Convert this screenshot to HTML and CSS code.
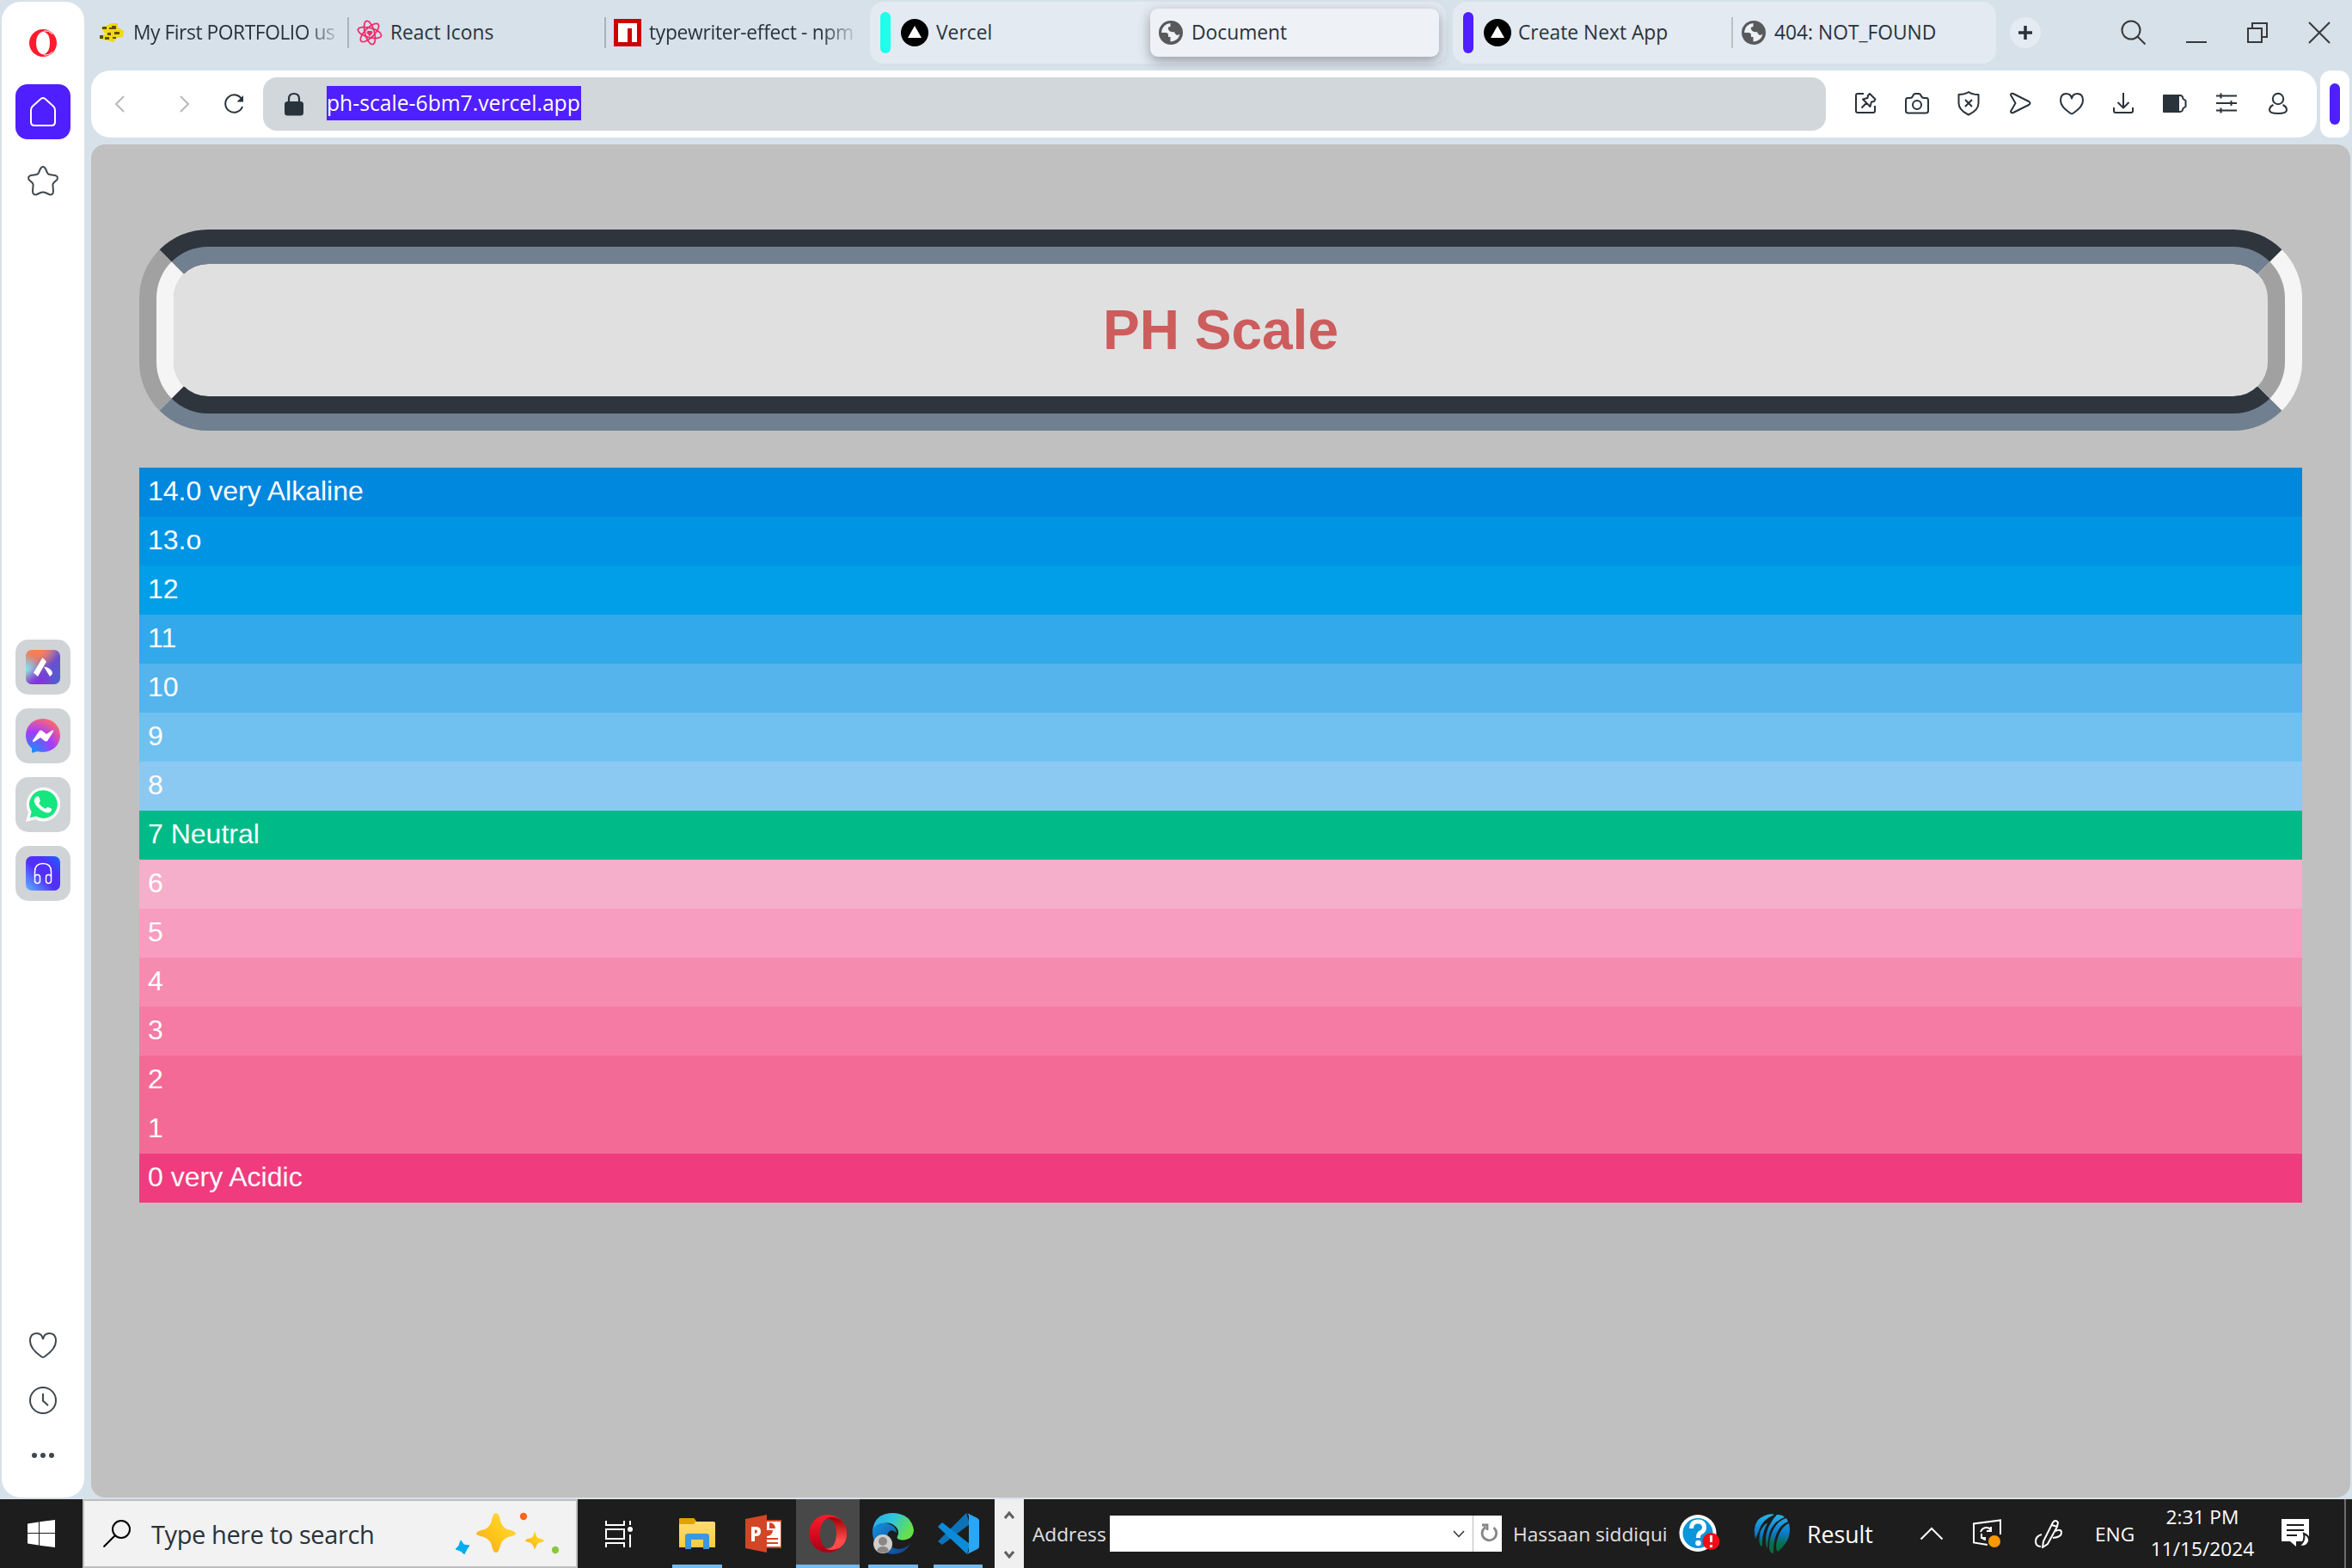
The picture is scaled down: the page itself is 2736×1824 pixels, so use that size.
FILE: index.html
```html
<!DOCTYPE html>
<html lang="en">
<head>
<meta charset="utf-8">
<title>Document</title>
<link rel="stylesheet" href="styles.css">
</head>
<body>
<svg class="defs" width="0" height="0">
  <defs>
    <linearGradient id="aria" x1="0" y1="0" x2="1" y2="1"><stop offset="0" stop-color="#f58a55"/><stop offset=".3" stop-color="#c07a9a"/><stop offset=".6" stop-color="#6a4fd0"/><stop offset="1" stop-color="#4a63cf"/></linearGradient>
    <radialGradient id="ariaCyan" cx="0" cy=".55" r=".45"><stop offset="0" stop-color="#7fe6f2"/><stop offset="1" stop-color="#7fe6f2" stop-opacity="0"/></radialGradient>
    <radialGradient id="ariaViolet" cx=".4" cy="1" r=".5"><stop offset="0" stop-color="#8a2fe0"/><stop offset="1" stop-color="#8a2fe0" stop-opacity="0"/></radialGradient>
    <radialGradient id="ariaOrange" cx=".4" cy="0" r=".5"><stop offset="0" stop-color="#ff8048"/><stop offset="1" stop-color="#ff8048" stop-opacity="0"/></radialGradient>
    <radialGradient id="mess" cx=".2" cy="1" r="1.1"><stop offset="0" stop-color="#0a95ff"/><stop offset=".55" stop-color="#a33bff"/><stop offset="1" stop-color="#ff6a6c"/></radialGradient>
    <linearGradient id="phones" x1="0" y1="1" x2="1" y2="0"><stop offset="0" stop-color="#5cb8ff"/><stop offset=".45" stop-color="#5330fa"/><stop offset=".7" stop-color="#4d32fb"/><stop offset="1" stop-color="#1b66ff"/></linearGradient>
    <linearGradient id="star" x1="0" y1="1" x2="1" y2="0"><stop offset="0" stop-color="#f5a623"/><stop offset=".5" stop-color="#ffc81a"/><stop offset="1" stop-color="#fde04a"/></linearGradient>
    <linearGradient id="folder" x1="0" y1="0" x2="0" y2="1"><stop offset="0" stop-color="#ffdf7a"/><stop offset="1" stop-color="#fbc93f"/></linearGradient>
    <linearGradient id="operaA" x1="0" y1="0" x2="0" y2="1"><stop offset="0" stop-color="#ff1b2d"/><stop offset="1" stop-color="#a70014"/></linearGradient>
    <linearGradient id="operaB" x1="0" y1="0" x2="0" y2="1"><stop offset="0" stop-color="#9c0000"/><stop offset=".7" stop-color="#ff4b4b"/></linearGradient>
    <linearGradient id="edgeTop" x1="0" y1="0" x2="1" y2=".4"><stop offset="0" stop-color="#2aa8ea"/><stop offset=".5" stop-color="#2fc5dc"/><stop offset="1" stop-color="#66e04a"/></linearGradient>
    <linearGradient id="edgeLow" x1="0" y1="0" x2="1" y2="1"><stop offset="0" stop-color="#1490df"/><stop offset="1" stop-color="#123f86"/></linearGradient>
    <linearGradient id="icc" x1="0" y1="0" x2="0" y2="1"><stop offset="0" stop-color="#29b4e8"/><stop offset=".5" stop-color="#0b78c8"/><stop offset=".75" stop-color="#06704f"/><stop offset="1" stop-color="#0a6a3c"/></linearGradient>
    <symbol id="globe" viewBox="0 0 28 28"><circle cx="14" cy="14" r="14" fill="#58595b"/><path d="M13.5 3 Q4 4 3 14 H8 Q11 14 11 17 V19 H13.5 V24.5 Q22 24 24.5 16 Q24 16 21 17 Q18 15 18 13 Q13 14 11 10 Q10 7 13.500 7 Z" fill="#eef1f6"/></symbol>
    <symbol id="vercel" viewBox="0 0 32 32"><circle cx="16" cy="16" r="16"/><path d="M16 8 L24 22 H8 Z" fill="#fff"/></symbol>
  </defs>
</svg>
<div class="browser">
  <nav class="sidebar">
    <svg class="opera" width="32" height="32" viewBox="0 0 32 32"><path fill-rule="evenodd" d="M16 0 A16 16 0 1 0 16 32 A16 16 0 1 0 16 0 Z M16 2.500 Q24 4 24 16 Q24 28 16 29.500 Q8 27 8 16 Q8 5 16 2.500 Z" fill="#ff1b2d"/><path d="M17 2.200 Q23 1 27 6 M17 29.800 Q23 31 27 26" stroke="#fff" stroke-width="1" fill="none"/></svg>
    <div class="home"><svg width="34" height="36" viewBox="0 0 34 36"><path d="M3 16 Q3 13.500 5 11.500 L14.500 3 Q17 1 19.500 3 L29 11.500 Q31 13.500 31 16 V30 Q31 34 27 34 H7 Q3 34 3 30 Z"/></svg></div>
    <svg class="line pin-star" width="38" height="36" viewBox="0 0 38 36"><path d="M19 2 Q21 2 22.300 5 L24 9 Q25 11 27.500 11.300 L33 12 Q37 13 35.500 17 L31.500 20.500 Q30 22 30.500 24.500 L31 30 Q31 35 27 34.500 L21.500 32 Q19 31 16.500 32 L11 34.500 Q7 35 7 30 L7.500 24.500 Q8 22 6.500 20.500 L2.500 17 Q1 13 5 12 L10.500 11.300 Q13 11 14 9 L15.700 5 Q17 2 19 2 Z"/></svg>
    <div class="apps">
      <div class="app"><svg width="40" height="40" viewBox="0 0 40 40"><rect width="40" height="40" rx="7" fill="url(#aria)"/><rect width="40" height="40" rx="7" fill="url(#ariaCyan)"/><rect width="40" height="40" rx="7" fill="url(#ariaViolet)"/><rect width="40" height="40" rx="7" fill="url(#ariaOrange)"/><path d="M19.500 9 L24 13.500 L14 31 L9 26.500 Z M21 19.500 Q31 21 31 28 L28 31 Z" fill="#fff"/></svg></div>
      <div class="app"><svg width="40" height="40" viewBox="0 0 40 40"><path d="M20 0 C8.500 0 0 8.300 0 19.500 C0 26 3 31 7 34.500 V39 Q7.200 40 8.500 39.600 L13.500 37.900 C26 41.500 40 34 40 19.500 C40 8.300 31.500 0 20 0 Z" fill="url(#mess)"/><path d="M8 25.500 L15.500 14.500 Q17 13 19 14 L24 18 L31 13.500 Q33 13 32 15 L25.500 25.500 Q24 27 22 26 L17 22 L9.500 27 Q7.500 27 8 25.500 Z" fill="#fff"/></svg></div>
      <div class="app"><svg width="40" height="40" viewBox="0 0 40 40"><path d="M20.500 0 A19.700 19.700 0 1 1 11 37 L0 40 L3.200 29 A19.700 19.700 0 0 1 20.500 0 Z" fill="#fff"/><path d="M20.500 3.300 A16.300 16.300 0 1 1 12 33.500 L4.800 35.300 L6.700 28.500 A16.300 16.300 0 0 1 20.500 3.300 Z" fill="#16e67f"/><path d="M12 11 Q14.500 9.500 15.500 11.500 L16.800 15.500 Q16.500 17 15.200 18.500 Q18 23 23 25 L25 23 Q26 22.500 30 24.800 Q30.500 27 28.500 28.500 Q25 31 18 26.500 Q8 19 10 13.500 Z" fill="#fff"/></svg></div>
      <div class="app"><svg width="40" height="40" viewBox="0 0 40 40"><rect width="40" height="40" rx="7" fill="url(#phones)"/><g fill="none" stroke="#fff" stroke-width="1.500"><path d="M10.500 24 V18 Q10.500 8.500 20 8.500 Q29.500 8.500 29.500 18 V24"/><rect x="10.500" y="21.500" width="6" height="10" rx="3"/><rect x="23.500" y="21.500" width="6" height="10" rx="3"/></g></svg></div>
    </div>
    <div class="tools">
      <svg class="line" width="34" height="32" viewBox="0 0 34 32"><path d="M17 9 Q16 2 9.500 2 Q2 2 2 11 Q2 20 15 29 Q17 30.500 19 29 Q32 20 32 11 Q32 2 24.500 2 Q18 2 17 9 Z"/></svg>
      <svg class="line" width="32" height="32" viewBox="0 0 32 32"><circle cx="16" cy="16" r="15"/><path d="M16 8 V16.500 L22 22"/></svg>
      <svg width="26" height="6" viewBox="0 0 26 6" fill="#3e4850"><circle cx="3" cy="3" r="3"/><circle cx="13" cy="3" r="3"/><circle cx="23" cy="3" r="3"/></svg>
    </div>
  </nav>
  <div class="main">
    <header class="tabs">
      <div class="tab t1"><svg width="30" height="24" viewBox="0 0 30 24"><path d="M2 6 L9 4 L14 1 L22 1 L22 6 L29 10 L28 17 L21 18 L17 23 L10 21 L2 20 L1 16 L8 14 Z" fill="#f2d90d"/><path d="M4 5 H9 V8 H4 Z M12 6 H15 V4 H20 V8 H12 Z M10 12 H14 V15 H10 Z M18 11 H24 V14 H18 Z M1 15 H5 V19 H1 Z M7 17 H12 V20 H7 Z M16 17 H20 V19 H16 Z" fill="#5c5108"/></svg><span class="label fade">My First PORTFOLIO us</span></div>
      <div class="tab t2"><svg width="30" height="30" viewBox="0 0 30 30" fill="none" stroke="#ee2c6c" stroke-width="1.800"><ellipse cx="15" cy="15" rx="14" ry="5.500" transform="rotate(15 15 15)"/><ellipse cx="15" cy="15" rx="14" ry="5.500" transform="rotate(75 15 15)"/><ellipse cx="15" cy="15" rx="14" ry="5.500" transform="rotate(135 15 15)"/><path d="M15 18 L12.500 15 Q12.500 13 15 14 Q17.500 13 17.500 15 Z" fill="#ee2c6c"/></svg><span class="label">React Icons</span></div>
      <div class="tab t3"><svg width="32" height="32" viewBox="0 0 32 32"><path fill="#c00" d="M0 0H32V32H0Z"/><path fill="#fff" d="M5 5H27V27H21V11H16V27H5Z"/></svg><span class="label fade">typewriter-effect - npm</span></div>
      <div class="group g1">
        <i class="mark teal"></i>
        <div class="gtab"><svg width="32" height="32"><use href="#vercel"/></svg><span class="label">Vercel</span></div>
        <div class="active"><svg width="28" height="28"><use href="#globe"/></svg><span class="label">Document</span></div>
      </div>
      <div class="group g2">
        <i class="mark"></i>
        <div class="gtab"><svg width="32" height="32"><use href="#vercel"/></svg><span class="label">Create Next App</span></div>
        <div class="gtab last"><svg width="28" height="28"><use href="#globe"/></svg><span class="label">404: NOT_FOUND</span></div>
      </div>
      <div class="plus"><svg width="16" height="16" viewBox="0 0 16 16"><path d="M8 0V16M0 8H16" stroke="#29333b" stroke-width="3.500"/></svg></div>
      <div class="window">
        <svg width="30" height="30" viewBox="0 0 30 30"><circle cx="12" cy="12" r="10.500"/><path d="M19 19 L28.500 28.500"/></svg>
        <svg width="24" height="28" viewBox="0 0 24 28"><path d="M0 25H24"/></svg>
        <svg width="26" height="26" viewBox="0 0 26 26"><path d="M7 7V2H24V18H19M2 8H18V24H2Z"/></svg>
        <svg width="26" height="26" viewBox="0 0 26 26"><path d="M1 1L25 25M25 1L1 25"/></svg>
      </div>
    </header>
    <div class="bars">
      <div class="toolbar">
        <svg class="nav dim" width="12" height="20" viewBox="0 0 12 20"><path d="M11 1L2 10L11 19"/></svg>
        <svg class="nav dim fwd" width="12" height="20" viewBox="0 0 12 20"><path d="M1 1L10 10L1 19"/></svg>
        <svg class="nav reload" width="24" height="24" viewBox="0 0 24 24"><path d="M21.500 7 A10.200 10.200 0 1 0 22 15"/><path d="M23 2V9.500H15.500Z" fill="#29333b" stroke="none"/></svg>
        <div class="url"><svg width="22" height="28" viewBox="0 0 22 28"><path d="M5 12V8Q5 2 11 2Q17 2 17 8V12" fill="none" stroke="#29333b" stroke-width="2.200"/><rect y="11" width="22" height="16.500" rx="3.500" fill="#29333b"/></svg><span class="address">ph-scale-6bm7.vercel.app</span></div>
        <div class="actions">
          <svg viewBox="0 0 30 30"><path d="M13 4H6Q4 4 4 6V24Q4 26 6 26H24Q26 26 26 24V18"/><path d="M20 4L26.500 10.500L25 13L22 13.500L20.500 19L12 10.500L17.500 9L18 6Z M16 15L10.500 20.500"/></svg>
          <svg viewBox="0 0 30 30"><path d="M10 7L11 5Q11.500 4 13 4H17Q18.500 4 19 5L20 7Q21 9 23 9H26Q28 9 28 12V24Q28 26.500 25 26.500H5Q2 26.500 2 24V12Q2 9 4 9H7Q9 9 10 7Z"/><circle cx="15" cy="17" r="5"/></svg>
          <svg viewBox="0 0 30 30"><path d="M15 2Q19 5 26.500 5V15Q26.500 23 15 28.500Q3.500 23 3.500 15V5Q11 5 15 2ZM11 11L19 19M19 11L11 19"/></svg>
          <svg viewBox="0 0 30 30"><path d="M4 5.500Q4 3 7 4L25 13Q28 15 25 17L7 26Q4 27 4 24.500L9.500 15Z"/></svg>
          <svg viewBox="0 0 30 30"><path d="M15 9.500Q14 4 8.500 4Q2 4 2 12Q2 19 13 26.500Q15 28 17 26.500Q28 19 28 12Q28 4 21.500 4Q16 4 15 9.500Z"/></svg>
          <svg viewBox="0 0 30 30"><path d="M15 3V20M8.500 14L15 20.500L21.500 14M4 20V24Q4 26 6 26H24Q26 26 26 24V20"/></svg>
          <svg viewBox="0 0 30 30"><path d="M2 8Q2 6 4 6H21Q24 6 24.500 10L27.500 12V19L24.500 21Q24 25 21 25H4Q2 25 2 23Z"/><path d="M2 6H19V25H2Z" fill="#29333b"/></svg>
          <svg viewBox="0 0 30 30"><path d="M3 6.500H27M3 15H27M3 23.500H27M8.500 3.500V9.500M20.500 12V18M8.500 20.500V26.500"/></svg>
          <svg viewBox="0 0 30 30"><circle cx="15" cy="10" r="6.200"/><path d="M9.500 17Q5 19 5 23Q5 27 15 27Q25 27 25 23Q25 19 20.500 17"/></svg>
        </div>
      </div>
      <div class="island"><i class="mark"></i></div>
    </div>
    <main class="page">
      <h1 class="title">PH Scale</h1>
      <div class="scale">
        <div class="row p14">14.0 very Alkaline</div>
        <div class="row p13">13.o</div>
        <div class="row p12">12</div>
        <div class="row p11">11</div>
        <div class="row p10">10</div>
        <div class="row p9">9</div>
        <div class="row p8">8</div>
        <div class="row p7">7 Neutral</div>
        <div class="row p6">6</div>
        <div class="row p5">5</div>
        <div class="row p4">4</div>
        <div class="row p3">3</div>
        <div class="row p2">2</div>
        <div class="row p1">1</div>
        <div class="row p0">0 very Acidic</div>
      </div>
    </main>
  </div>
</div>
<footer class="taskbar">
  <div class="start"><svg width="32" height="32" viewBox="0 0 32 32"><path fill="#fff" d="M0 4.500L13 2.500V15H0ZM14 2.300L32 0V15H14ZM0 16H13V29.500L0 27.500ZM14 16H32V32L14 29.700Z"/></svg></div>
  <div class="search"><svg width="32" height="32" viewBox="0 0 32 32" fill="none" stroke="#000" stroke-width="2"><circle cx="21" cy="11" r="10"/><path d="M14 18L.5 31.500"/></svg><span class="hint">Type here to search</span>
    <svg class="sparkles" width="124" height="52" viewBox="0 0 124 52"><path d="M27 2Q30 2 31.500 8Q33 18 40 21Q50 23 50 26Q50 28 41 30Q33 33 31.500 42Q30 48 27 48Q24 48 22.500 42Q21 33 13 30Q4 28 4 26Q4 23 14 21Q21 18 22.500 8Q24 2 27 2Z" fill="url(#star)"/><path d="M72 23Q74 30 76 31Q83 33 83 34Q83 35.500 76 37Q74 39 72 44.500Q70 39 68 37Q61 35 61 34Q61 32.500 68 31Q70 30 72 23Z" fill="url(#star)"/><circle cx="59" cy="6" r="4.200" fill="#f7661f"/><circle cx="96" cy="45" r="4.200" fill="#8cc63f"/></svg><svg class="blue" width="18" height="18" viewBox="0 0 18 18"><path d="M7 1L10.500 6L17 7L14 11L11 17L7.500 13.500L1 11L5 7Z" fill="#00adef" stroke="#00adef" stroke-linejoin="round"/></svg>
  </div>
  <div class="task view"><svg width="34" height="32" viewBox="0 0 34 32" fill="none" stroke="#fff" stroke-width="2"><path d="M1 1V6H22V1M1 11H22V22H1ZM1 32V27H22V32M29 1V6M29 17V32"/><circle cx="29" cy="11" r="3" fill="#fff" stroke="none"/></svg></div>
  <div class="task run"><svg width="42" height="36" viewBox="0 0 42 36"><path d="M0 2Q0 0 2 0H17L20 4H40Q42 4 42 6V34H0Z" fill="url(#folder)"/><path d="M0 2Q0 0 2 0H17L20 3.500L17 7H0Z" fill="#e2a100"/><path d="M7 36V21Q7 18 10 18H32Q35 18 35 21V36H28V25H14V36Z" fill="#3d96e0"/></svg></div>
  <div class="task"><svg width="42" height="44" viewBox="0 0 42 44"><path d="M24 7H42V38H24Z" fill="#fff" stroke="#d24625" stroke-width="2"/><path d="M25 11A7 7 0 0 0 25 25A7 7 0 0 0 32 18H25Z" fill="#d24625"/><path d="M28 9A7 7 0 0 1 35 16H28Z" fill="#d24625"/><path d="M24 28H38M24 33H38" stroke="#d24625" stroke-width="2"/><path d="M0 5L25 0V44L0 39Z" fill="#d24625"/><path fill-rule="evenodd" d="M7 14H12Q18 14 18 19.500Q18 25 12 25H11V31H7ZM11 17.500V21.700Q14 22 14 19.500Q14 17 11 17.500Z" fill="#fff"/></svg></div>
  <div class="task current"><svg width="44" height="44" viewBox="0 0 44 44"><path fill-rule="evenodd" d="M22 0A22 22 0 1 0 22 44A22 22 0 1 0 22 0ZM23 4Q13 7 13 22Q13 37 23 40Q32 38 32 22Q32 6 23 4Z" fill="url(#operaA)"/><path d="M18 5Q27 1 35 5Q44 11 44 22Q44 33 36 38.500Q27 43 18 39Q31 42 32 22Q31 2 18 5Z" fill="url(#operaB)"/></svg></div>
  <div class="task run edge"><svg width="50" height="50" viewBox="0 0 50 50"><path d="M1 22Q3 1 25 1Q46 2 49 21Q48 32 36 32.500Q28 32 30 28Q34 20 24 14Q12 9 1 22Z" fill="url(#edgeTop)"/><path d="M1 20Q7 11 18 13Q29 16 29 24Q20 17 18 28Q19 43 32 43Q40 42 45 37Q38 49 25 49Q4 47 1 26Z" fill="url(#edgeLow)"/><circle cx="13" cy="37" r="11" fill="#d0cecb"/><circle cx="13" cy="34" r="5" fill="#8a8683"/><path d="M6 45Q7 40 13 40Q19 40 20 45Q13 50 6 45Z" fill="#8a8683"/></svg></div>
  <div class="task run code"><svg width="50" height="50" viewBox="0 0 50 50"><path d="M1 34L34 1L38 14L6 38Z" fill="#0d72b8"/><path d="M1 17L6 12L38 37L35 49Z" fill="#0b8bd8"/><path d="M35 1L47 7Q49 8 49 10V40Q49 42 47 43L35 49Q37 47 37 45V5Q37 3 35 1Z" fill="#2aa6f2"/></svg></div>
  <div class="scroll"><svg width="12" height="9" viewBox="0 0 12 9"><path d="M1 8L6 2L11 8"/></svg><svg width="12" height="9" viewBox="0 0 12 9"><path d="M1 1L6 7L11 1"/></svg></div>
  <span class="txt addr">Address</span>
  <div class="field"><svg width="14" height="9" viewBox="0 0 14 9" fill="none" stroke="#333" stroke-width="1.500"><path d="M1 1L7 7.500L13 1"/></svg><div class="go"><svg width="20" height="22" viewBox="0 0 20 22"><path d="M15.500 5A8.300 8.300 0 1 1 6 4.500M2 2H8V8" fill="none" stroke="#858585" stroke-width="2.800"/></svg></div></div>
  <span class="txt user">Hassaan siddiqui</span>
  <svg class="help" width="48" height="46" viewBox="0 0 48 46"><circle cx="22" cy="22.500" r="21.500" fill="#fff"/><circle cx="22" cy="22.500" r="17.500" fill="#0b95da"/><path d="M14.500 17Q14.500 9 22 9Q29.500 9 29.500 16Q29.500 20 25 22Q22.500 23.500 22.500 28" fill="none" stroke="#fff" stroke-width="5"/><circle cx="22.500" cy="34" r="3.300" fill="#fff"/><circle cx="37.500" cy="32" r="10" fill="#f30b16"/><path d="M37.500 25V33M37.500 36V39" stroke="#fff" stroke-width="3"/></svg>
  <svg class="icc" width="42" height="46" viewBox="0 0 42 46"><path fill="url(#icc)" d="M2 29Q-3 8 13 2Q20-1 24 1Q9 7 6 20Q3 27 2 29ZM27 1Q34 1 36 4Q25 8 20 18Q17 24 16 40Q14 38 14 30Q14 22 18 14Q22 6 27 1ZM7 35Q5 22 11 15Q14 11 16 11Q10 20 10 36Q9 40 7 35ZM38 5L40 9Q30 13 26 25Q23 32 23 46Q19 46 18 40Q18 28 23 18Q28 8 38 5ZM41 11Q44 23 38 33Q33 40 28 44Q24 40 28 28Q32 15 41 11Z"/></svg>
  <span class="txt result">Result</span>
  <svg class="caret" width="28" height="16" viewBox="0 0 28 16" fill="none" stroke="#fff" stroke-width="2"><path d="M1.500 14.500L14 2L26.500 14.500"/></svg>
  <svg class="sync" width="34" height="34" viewBox="0 0 34 34" fill="none" stroke="#fff" stroke-width="2"><path d="M17 30L1 27.500V5.500L32 1.500V18M9 15Q11 10 16 10Q19 10 21 13M21 9V14H16M15 22H10V17M10 21Q12 24 15 24"/><circle cx="25" cy="26" r="7" fill="#f90" stroke="none"/></svg>
  <svg class="pen" width="34" height="34" viewBox="0 0 34 34" fill="none" stroke="#fff" stroke-width="2"><path d="M11 26L22 4Q25 0 28 4L27 9L16 29L10 33ZM21 7L27 9M9 18Q2 20 2 26Q2 32 8 32M25 14Q32 11 32 16Q32 21 22 22"/></svg>
  <span class="txt lang">ENG</span>
  <div class="txt clock"><span class="time">2:31 PM</span><span class="date">11/15/2024</span></div>
  <svg class="note" width="34" height="34" viewBox="0 0 34 34"><path d="M0 0H32V26H17V32L10 26H0Z" fill="#fff"/><path d="M6 7H26M6 13H26M6 19H18" stroke="#1d1d1d" stroke-width="2"/><path d="M26 17Q33 20 32 26Q29 34 20 31Q28 27 26 17Z" fill="#fff" stroke="#1d1d1d" stroke-width="2"/></svg>
  <i class="peek"></i>
</footer>
</body>
</html>
```
FILE: styles.css
```css
* { box-sizing: border-box; }
body { margin: 0; width: 2736px; height: 1824px; overflow: hidden; background: #d7e1ea; font-family: "Open Sans", "Noto Sans", sans-serif; color: #29333b; display: flex; flex-direction: column; }
svg { display: block; flex: none; }
.defs { position: absolute; }
.browser { height: 1744px; display: flex; padding: 2px; flex: none; }
.sidebar { width: 96px; height: 1740px; background: #fff; border-radius: 22px; display: flex; flex-direction: column; align-items: center; padding-top: 32px; flex: none; }
.home { width: 64px; height: 64px; border-radius: 14px; background: #4f1fff; margin-top: 32px; display: flex; align-items: center; justify-content: center; }
.home path { fill: none; stroke: #fff; stroke-width: 2; }
.line { fill: none; stroke: #3e4850; stroke-width: 2; }
.pin-star { margin-top: 30px; }
.apps { margin-top: 516px; display: flex; flex-direction: column; gap: 16px; }
.app { width: 64px; height: 64px; border-radius: 15px; background: #d0d4d7; display: flex; align-items: center; justify-content: center; }
.tools { margin-top: 501px; display: flex; flex-direction: column; align-items: center; gap: 32px; }
.tools svg:last-child { margin-top: 13px; }

.main { flex: 1; margin-left: 8px; min-width: 0; display: flex; flex-direction: column; }
.tabs { height: 72px; display: flex; align-items: center; flex: none; }
.label { font-size: 22.8px; line-height: 32px; white-space: nowrap; margin-left: 9px; margin-top: -1px; overflow: hidden; }
.fade { flex: 1; -webkit-mask-image: linear-gradient(90deg, #000 calc(100% - 45px), transparent); mask-image: linear-gradient(90deg, #000 calc(100% - 45px), transparent); }
.tab { height: 36px; display: flex; align-items: center; flex: none; }
.t1 { width: 298px; padding-left: 9px; padding-right: 4px; }
.t1 .label { margin-left: 10px; letter-spacing: -.45px; }
.t2 { width: 299px; padding-left: 9px; border-left: 2px solid #a9b3ba; }
.t3 { width: 309px; padding-left: 9px; padding-right: 12px; border-left: 2px solid #a9b3ba; }
.t3 .label { letter-spacing: -.3px; }
.group { height: 72px; border-radius: 16px; background: #e3eaf1; display: flex; align-items: center; padding-left: 12px; flex: none; }
.g1 { width: 670px; }
.g2 { width: 632px; margin-left: 8px; }
.mark { width: 12px; height: 48px; border-radius: 6px; background: #4f1fff; flex: none; }
.teal { background: #1fffe9; }
.gtab { display: flex; align-items: center; margin-left: 12px; width: 290px; }
.active { width: 336px; height: 56px; border-radius: 9px; background: #eef1f6; box-shadow: 0 5px 14px rgba(60,65,75,.45); display: flex; align-items: center; padding-left: 10px; }
.active .label { margin-left: 10px; }
.g2 .gtab { width: 288px; }
.g2 .gtab .label { margin-left: 8px; }
.g2 .last { margin-left: 0; height: 36px; width: auto; border-left: 2px solid #bcc1c6; padding-left: 10px; }
.g2 .last .label { margin-left: 10px; }
.plus { width: 36px; height: 36px; border-radius: 50%; background: #e5ebf2; margin-left: 16px; display: flex; align-items: center; justify-content: center; }
.window { margin-left: 93px; display: flex; align-items: center; gap: 46px; fill: none; stroke: #383838; stroke-width: 2; }

.bars { margin-top: 8px; height: 78px; display: flex; gap: 4px; flex: none; }
.toolbar { width: 2589px; height: 78px; border-radius: 22px; background: #fff; display: flex; align-items: center; padding-left: 27px; flex: none; }
.nav { fill: none; stroke: #29333b; stroke-width: 2; }
.dim { stroke: #b5b9bc; }
.fwd { margin-left: 64px; }
.reload { margin-left: 39px; }
.url { width: 1818px; height: 62px; margin-left: 22px; border-radius: 16px; background: #d2d7db; display: flex; align-items: center; padding-left: 25px; }
.address { margin: -2px 0 0 27px; height: 40px; line-height: 39px; font-size: 24.7px; color: #fff; background: #4f1fff; width: 296px; white-space: nowrap; }
.actions { display: flex; gap: 30px; margin: -2px 0 0 31px; }
.actions svg { width: 30px; height: 30px; fill: none; stroke: #29333b; stroke-width: 2; stroke-linejoin: round; }
.island { width: 34px; height: 78px; border-radius: 12px; background: #fff; display: flex; align-items: center; padding-left: 11px; }

.page { margin-top: 8px; width: 2628px; flex: 1; background: #c0c0c0; border-radius: 16px; padding: 99px 56px 0; }
.title { margin: 0; height: 234px; border: 40px groove; border-color: slategray whitesmoke; border-radius: 80px; background: #e0e0e0; color: #cd5c5c; font: bold 64px/154px "Liberation Sans", Arial, sans-serif; text-align: center; }
.scale { margin-top: 43px; font: 32px/37px "Liberation Sans", Arial, sans-serif; color: #fff; }
.row { padding: 9px 10px 11px; height: 57px; }
.p14 { background: #0087de; } .p13 { background: #0095e4; } .p12 { background: #009fe8; }
.p11 { background: #31a9ea; } .p10 { background: #55b4ec; } .p9 { background: #70c1f0; }
.p8 { background: #8cc9f2; } .p7 { background: #00bb88; } .p6 { background: #f5afca; }
.p5 { background: #f79dbf; } .p4 { background: #f68bb0; } .p3 { background: #f57aa4; }
.p2, .p1 { background: #f46a97; } .p0 { background: #f03c7e; }

.taskbar { height: 80px; background: #1d1d1d; display: flex; align-items: center; flex: none; }
.start { width: 96px; padding-left: 32px; }
.search { width: 576px; height: 80px; background: #f2f2f2; border: 2px solid #bdbdbd; display: flex; align-items: center; padding-left: 22px; position: relative; flex: none; }
.hint { margin-left: 24px; font-size: 29px; white-space: nowrap; letter-spacing: -.4px; }
.sparkles { position: absolute; left: 452px; top: 12px; }
.blue { position: absolute; left: 431px; top: 45px; }
.task { width: 76px; height: 80px; display: flex; align-items: center; justify-content: center; flex: none; }
.view { width: 96px; }
.view svg { margin-left: 2px; }
.view + .task { width: 58px; margin: 0 10px 0 14px; }
.current { width: 74px; margin-right: 10px; background: #484848; }
.run { border-bottom: 4px solid #76b9ed; border-top: 4px solid transparent; }
.current { border-bottom: 4px solid #76b9ed; border-top: 4px solid #484848; }
.edge { width: 58px; margin-right: 18px; }
.code { width: 57px; margin-right: 14px; }
.scroll { width: 34px; height: 80px; background: #f0f0f0; display: flex; flex-direction: column; justify-content: space-between; align-items: center; padding: 14px 0 11px; fill: none; stroke: #606060; stroke-width: 3; flex: none; }
.txt { color: #e0e0e0; font-size: 22.7px; white-space: nowrap; flex: none; }
.addr { width: 100px; padding-left: 10px; }
.field { width: 456px; height: 42px; background: #fff; display: flex; align-items: center; padding-left: 399px; flex: none; }
.go { margin-left: 9px; height: 42px; border-left: 1px solid #bbb; padding: 9px 0 0 8px; }
.user { width: 179px; margin-left: 13px; }
.help { margin-left: 14px; }
.icc { margin-left: 39px; }
.result { margin-left: 20px; width: 76px; font-size: 26.7px; color: #fff; }
.caret { margin-left: 55px; }
.sync { margin-left: 34px; }
.pen { margin-left: 37px; }
.lang { margin-left: 37px; width: 47px; color: #fff; }
.clock { margin-left: 16px; width: 124px; color: #fff; display: flex; flex-direction: column; align-items: center; line-height: 37px; padding-bottom: 2px; }
.note { margin-left: 30px; }
.peek { margin-left: 39px; width: 2px; height: 80px; background: #6e6e6e; }
```
